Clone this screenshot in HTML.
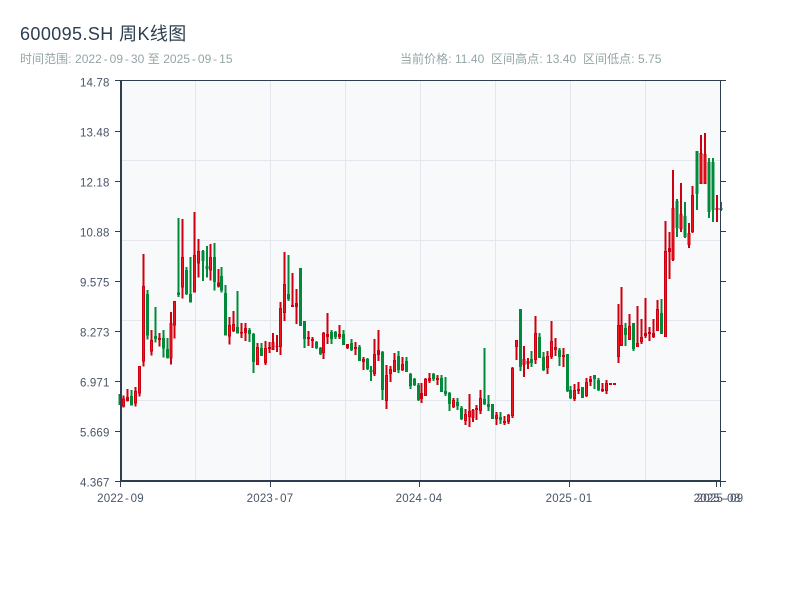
<!DOCTYPE html>
<html lang="zh"><head><meta charset="utf-8"><title>600095.SH 周K线图</title>
<style>
html,body{margin:0;padding:0;background:#fff}
body{width:800px;height:600px;overflow:hidden;position:relative;font-family:"Liberation Sans","Noto Sans CJK SC",sans-serif}
svg{position:absolute;left:0;top:0}
text{font-family:"Liberation Sans","Noto Sans CJK SC",sans-serif}
.t{font-size:18px;fill:#2c3e50;letter-spacing:.4px}
.s{font-size:12px;fill:#95a5a6;letter-spacing:.05px}
.y{font-size:11.5px;fill:#4a5568;text-anchor:end;letter-spacing:.15px}
.x{font-size:11.5px;fill:#4a5568;text-anchor:middle;letter-spacing:.2px}
.c{shape-rendering:crispEdges}
</style></head><body>
<svg width="800" height="600" viewBox="0 0 800 600">
<text class="t" x="20" y="40">600095.SH 周K线图</text>
<text class="s" x="20" y="63">时间范围: 2022<tspan dx="1.8" letter-spacing="2">-</tspan>09<tspan dx="1.8" letter-spacing="2">-</tspan>30 至 2025<tspan dx="1.8" letter-spacing="2">-</tspan>09<tspan dx="1.8" letter-spacing="2">-</tspan>15</text>
<text class="s" x="400" y="63">当前价格: 11.40</text>
<text class="s" x="491" y="63">区间高点: 13.40</text>
<text class="s" x="583" y="63">区间低点: 5.75</text>

<rect x="121" y="81" width="599" height="400" fill="#f8f9fa"/>
<path d="M121 160.5H720M121 240.5H720M121 320.5H720M121 400.5H720M195.5 81V481M270.5 81V481M345.5 81V481M420.5 81V481M495.5 81V481M570.5 81V481M645.5 81V481" stroke="#e3e6ec" stroke-width="1" fill="none"/>

<g class="c">
<!-- green candles -->
<path fill="none" stroke="#008a3a" stroke-width="2" d="M120 394V405M131.3 390V405.7M147.7 290V339.3M155.3 307V342.7M163.7 330V357.7M167.7 338V358.7M178.3 218V297M186.3 267V295M190.3 257V302.7M203 250V281M207 246V277.7M214.7 243V290.7M221.7 267V292.7M225.3 285V335.7M237.7 291V333.7M249.7 328V342M253.7 333V373M261.3 343V356M288.7 255V301M300.7 268V326M304.7 321V348M316.7 341V349M320.3 347V355M331.7 330V344M335.7 331V339M343.7 330V345M351.7 339V351M359.7 345V361M367.7 358V370M371 366V381M382.7 351V400M398.7 351V373M406.7 357V372M410.3 373V389M414.3 378V386M418.3 383V401M433.7 373V381M441.3 375V392M445.7 377V396M449.3 392V411M457.7 398V410M461.7 406V420M484.7 348V405M488.7 395V411M492.3 404V419M500.7 412V424M520.3 309V371M531.3 351V367M539.7 333V358M543.7 352V371M559.7 348V366M567.7 354V392M570.7 386V399M582.7 387V398M594.3 375V389M598.3 378V391M625.7 323V346M633.7 323V351M661.7 299V334M677 199V237M685 202V238M697 151V210M709 158V218M713 158V222M721 202V211"/>
<path fill="none" stroke="#008a3a" stroke-width="3" d="M120 394V405M131.3 396V405.7M147.7 294V335.7M155.3 336V339M163.7 338V348.7M167.7 349V358M178.3 292.3V295M186.3 270V294M190.3 294V302.7M203 251V261M207 266V269M214.7 257V282M221.7 276V290.7M225.3 293V335.7M237.7 327V333.7M249.7 330V334M253.7 334V362M261.3 348V356M288.7 294V299M300.7 268V326M304.7 321V339M316.7 342V348M320.3 348V354M331.7 332V339M335.7 332V337M343.7 334V345M351.7 343V350M359.7 347V361M367.7 359V369M371 370V372M382.7 352V390M398.7 356V370M406.7 361V372M410.3 374V386M414.3 379V385M418.3 385V400M433.7 374V379M441.3 378V392M445.7 391V394M449.3 393V404M457.7 402V406M461.7 408V419M484.7 399V404M488.7 404V407M492.3 404V419M500.7 417V420M520.3 309V367M531.3 359V363M539.7 337V358M543.7 357V370M559.7 350V357M567.7 354V391M570.7 390V398M582.7 387V398M594.3 375V379M598.3 380V390M625.7 328V335M633.7 323V349M661.7 313V334M677 201V228M685 216V237M697 151V194M709 162V212M713 162V210M721 208V210"/>

<!-- red candles -->
<path fill="none" stroke="#cc0010" stroke-width="2" d="M123.7 395.7V407.7M127.7 389V401.3M135.3 387V406.7M139.3 366V396.7M143.7 254V366.7M151.3 330V355.7M159.7 333V346.7M171 312V364.7M174.3 301V338.7M182.7 219V298.7M194.7 212V292.7M198.7 239V277.7M210.7 244V280.7M218.7 269V287.7M229.7 317V344.7M233.7 311V332M241.7 323V338M245.7 323V341M257.3 343V365M265.3 341V365M269.7 342V353M273 333V350M277 335V352M280.7 302V355M284.7 252V321M292.7 273V307M296.7 289V324M308.7 331V346M312.7 337V348M323.7 332V359M327.7 313V344M339.7 325V339M347.7 344V349M355.7 342V355M363.7 357V370M374.7 339V376M378.7 330V361M386.7 365V409M390.3 366V382M394.3 353V372M402.7 357V371M421.7 383V403M425.3 378V396M429.7 373V383M437.7 375V385M453.3 398V408M465.7 409V425M469.7 394V427M473 409V422M476.7 405V420M480.3 390V414M496.7 412V425M504.7 416V425M508.7 414V424M512.3 367V418M516.3 340V360M524 346V377M528 358V369M535.7 316V364M547.7 351V374M551.7 321V359M555.7 338V356M563.7 348V367M574.7 384V401M578.7 382V394M586.7 378V397M590.7 376V386M602.3 383V392M606.3 380V394M618.3 304V363M621.7 287V346M629.7 314V340M637.7 306V347M641.7 319V344M645.7 298V338M649.7 327V341M653.7 319V338M657.7 300V331M665.7 221V337M669.5 232V279M673 170V261M681 183V232M689 223V248M692.7 186V233M701 135V184M705 133V184M717 195V222"/>
<path fill="none" stroke="#cc0010" stroke-width="3" d="M123.7 398.7V406.7M127.7 397V401M135.3 391V403.7M139.3 366V393.7M143.7 286V361.7M151.3 340V351.7M159.7 338V340M171 323V358.7M174.3 301V325.7M182.7 257V287.7M194.7 255V292.3M198.7 251V263.7M210.7 257V270.3M218.7 282.3V286.7M229.7 325V336.7M233.7 324V331M241.7 332V333.7M245.7 328V333M257.3 347V365M265.3 348V363M269.7 347V349M273 342V350M277 346V347M280.7 308V347M284.7 284V313M292.7 305V307M296.7 303V307M308.7 337V339M312.7 339V341M323.7 333V353M327.7 334V337M339.7 334V337M347.7 344V348M355.7 347V349M363.7 359V362M374.7 354V374M378.7 350V355M386.7 375V401M390.3 369V374M394.3 360V372M402.7 364V370M421.7 393V399M425.3 379V396M429.7 378V381M437.7 378V380M453.3 400V407M465.7 414V421M469.7 411V417M473 410V418M476.7 408V410M480.3 398V411M496.7 415V419M504.7 421V423M508.7 415V422M512.3 368V416M516.3 340V347M524 359V365M528 361V364M535.7 333V360M547.7 356V368M551.7 341V357M555.7 347V350M563.7 355V357M574.7 390V399M578.7 389V391M586.7 382V396M590.7 379V382M602.3 389V391M606.3 383V391M610.3 383V385M614.3 383V385M618.3 325V357M621.7 325V346M629.7 326V340M637.7 343V347M641.7 337V342M645.7 333V336M649.7 332V334M653.7 333V337M657.7 309V331M665.7 251V337M669.5 248V252M673 208V260M681 214V229M689 233V245M692.7 195V232M701 153V184M705 154V184M717 208V210"/>
<path fill="none" stroke="#f0161e" stroke-width="1" d="M123.7 399.7V405.7M135.3 392V402.7M139.3 367V392.7M143.7 287V360.7M151.3 341V350.7M171 324V357.7M174.3 302V324.7M182.7 258V286.7M194.7 256V291.3M198.7 252V262.7M210.7 258V269.3M229.7 326V335.7M233.7 325V330M257.3 348V364M265.3 349V362M273 343V349M280.7 309V346M284.7 285V312M323.7 334V352M374.7 355V373M386.7 376V400M390.3 370V373M394.3 361V371M402.7 365V369M425.3 380V395M453.3 401V406M465.7 415V420M469.7 412V416M473 411V417M480.3 399V410M496.7 416V418M508.7 416V421M512.3 369V415M516.3 341V346M524 360V364M535.7 334V359M547.7 357V367M551.7 342V356M555.7 348V349M574.7 391V398M586.7 383V395M606.3 384V390M618.3 326V356M621.7 326V345M629.7 327V339M637.7 344V346M641.7 338V341M657.7 310V330M665.7 252V336M673 209V259M681 215V228M689 234V244M692.7 196V231M701 154V183M705 155V183"/>
</g>

<!-- axes -->
<g fill="#2c3e50">
<rect x="120" y="81" width="2" height="401"/>
<rect x="120" y="480" width="600" height="2"/>
<rect x="115" y="80" width="611" height="1"/>
<rect x="720" y="80" width="1" height="407"/>
<path d="M115 131h5v1h-5zM115 181h5v1h-5zM115 231h5v1h-5zM115 281h5v1h-5zM115 331h5v1h-5zM115 381h5v1h-5zM115 431h5v1h-5zM115 481h5v1h-5zM721 131h5v1h-5zM721 181h5v1h-5zM721 231h5v1h-5zM721 281h5v1h-5zM721 331h5v1h-5zM721 381h5v1h-5zM721 431h5v1h-5zM721 481h5v1h-5zM120 482h1v5h-1zM270 482h1v5h-1zM419 482h1v5h-1zM569 482h1v5h-1zM716 482h1v5h-1z"/>
</g>

<text class="y" x="109.5" y="86.5">14.78</text>
<text class="y" x="109.5" y="136.5">13.48</text>
<text class="y" x="109.5" y="186.5">12.18</text>
<text class="y" x="109.5" y="236.5">10.88</text>
<text class="y" x="109.5" y="286.5">9.575</text>
<text class="y" x="109.5" y="336.5">8.273</text>
<text class="y" x="109.5" y="386.5">6.971</text>
<text class="y" x="109.5" y="436.5">5.669</text>
<text class="y" x="109.5" y="486.5">4.367</text>
<text class="x" x="120.5" y="502">2022<tspan dx="1.5" letter-spacing="1.8">-</tspan>09</text>
<text class="x" x="270" y="502">2023<tspan dx="1.5" letter-spacing="1.8">-</tspan>07</text>
<text class="x" x="419" y="502">2024<tspan dx="1.5" letter-spacing="1.8">-</tspan>04</text>
<text class="x" x="569" y="502">2025<tspan dx="1.5" letter-spacing="1.8">-</tspan>01</text>
<text class="x" x="717" y="502">2025<tspan dx="1.5" letter-spacing="1.8">-</tspan>08</text>
<text class="x" x="720" y="502">2025<tspan dx="1.5" letter-spacing="1.8">-</tspan>09</text>
</svg>
</body></html>
